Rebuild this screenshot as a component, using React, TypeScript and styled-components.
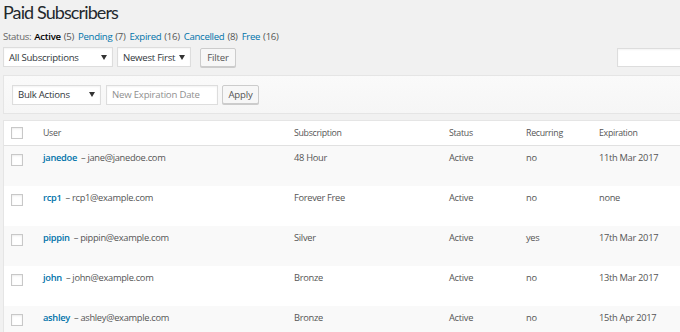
import React from "react";
import styled, { createGlobalStyle } from "styled-components";

const GlobalStyle = createGlobalStyle`
  html, body {
    margin: 0;
    padding: 0;
    background: #f1f1f1;
  }
  body {
    font-family: "Open Sans", "Noto Sans", sans-serif;
    color: #555;
  }
`;

const Page = styled.div`
  width: 680px;
  height: 332px;
  overflow: hidden;
  padding-left: 3px;
  box-sizing: border-box;
`;

const Title = styled.h1`
  margin: 0;
  padding-top: 1px;
  font-family: Lato, "Open Sans", sans-serif;
  font-size: 18px;
  font-weight: 400;
  line-height: 22px;
  color: #23282d;
  letter-spacing: -0.9px;
`;

const StatusLine = styled.div`
  margin-top: 6px;
  height: 16px;
  font-size: 9.6px;
  letter-spacing: -0.3px;
  line-height: 16px;
  color: #666;
  display: flex;
  gap: 4px;
  white-space: nowrap;
`;

const StatusItem = styled.span`
  display: inline-flex;
  gap: 3px;
`;

const Current = styled.span`
  font-weight: 600;
  color: #000;
`;

const Link = styled.a`
  color: #0073aa;
  text-decoration: none;
`;

const Count = styled.span`
  color: #555;
`;

const FilterBar = styled.div`
  margin-top: 2px;
  height: 20px;
  display: flex;
  align-items: center;
`;

const Select = styled.div<{ $width: number; $gap?: number }>`
  width: ${(p) => p.$width}px;
  height: 20px;
  box-sizing: border-box;
  border: 1px solid #ddd;
  background: #fff;
  box-shadow: inset 0 1px 2px rgba(0, 0, 0, 0.05);
  margin-right: ${(p) => p.$gap ?? 0}px;
  display: flex;
  align-items: center;
  justify-content: space-between;
  padding: 0 5px 0 5px;
  font-size: 9.6px;
  letter-spacing: -0.25px;
  color: #32373c;
  white-space: nowrap;
`;

const Arrow = styled.svg`
  width: 6px;
  height: 5px;
  flex: none;
`;

const Button = styled.div<{ $width: number }>`
  width: ${(p) => p.$width}px;
  height: 19px;
  box-sizing: border-box;
  border: 1px solid #ccc;
  border-radius: 2px;
  background: #f7f7f7;
  box-shadow: 0 1px 0 #ccc;
  display: flex;
  align-items: center;
  justify-content: center;
  font-size: 9.6px;
  letter-spacing: -0.2px;
  color: #555;
`;

const Spacer = styled.div`
  flex: 1;
`;

const Search = styled.div`
  width: 70px;
  height: 19px;
  box-sizing: border-box;
  border: 1px solid #ddd;
  background: #fff;
  margin-right: -7px;
  box-shadow: inset 0 1px 2px rgba(0, 0, 0, 0.05);
`;

const TableNav = styled.div`
  margin-top: 8px;
  margin-right: -2px;
  height: 39px;
  box-sizing: border-box;
  border: 1px solid #e5e5e5;
  border-right: none;
  background: linear-gradient(#fafafa, #f6f6f6);
  display: flex;
  align-items: center;
  padding-left: 8px;
`;

const DateInput = styled.input`
  width: 112px;
  height: 20px;
  box-sizing: border-box;
  border: 1px solid #ddd;
  background: #fff;
  font-family: inherit;
  font-size: 9.6px;
  letter-spacing: -0.2px;
  padding: 0 5px;
  margin: 0 4px 0 5px;
  outline: none;
  box-shadow: inset 0 1px 2px rgba(0, 0, 0, 0.05);
  &::placeholder {
    color: #8f8f8f;
  }
`;

const Table = styled.div`
  margin-top: 6px;
  border: 1px solid #e5e5e5;
  border-right: none;
  background: #fff;
`;

const Row = styled.div<{ $striped?: boolean; $head?: boolean }>`
  display: grid;
  grid-template-columns: 32px 251px 155px 77px 73px 1fr;
  height: ${(p) => (p.$head ? 24 : 40)}px;
  background: ${(p) => (p.$striped ? "#f9f9f9" : "#fff")};
  border-bottom: ${(p) => (p.$head ? "1px solid #e1e1e1" : "none")};
`;

const Cell = styled.div<{ $head?: boolean }>`
  padding: 4px 0 0 7px;
  font-size: ${(p) => (p.$head ? "8.8px" : "9.3px")};
  letter-spacing: -0.3px;
  line-height: 16px;
  color: #555;
  white-space: nowrap;
`;

const CheckCell = styled.div<{ $head?: boolean }>`
  padding: ${(p) => (p.$head ? "6px" : "8px")} 0 0 7px;
`;

const Checkbox = styled.div`
  width: 12px;
  height: 12px;
  box-sizing: border-box;
  border: 1px solid #c8c8c8;
  background: #fff;
  box-shadow: inset 0 1px 2px rgba(0, 0, 0, 0.08);
`;

const UserLink = styled.a`
  color: #0073aa;
  font-weight: 600;
  text-decoration: none;
  margin-right: 4px;
`;

const Email = styled.span`
  color: #555;
`;

const DropArrow = () => (
  <Arrow viewBox="0 0 6 5">
    <path d="M0 0 L6 0 L3 5 Z" fill="#333" />
  </Arrow>
);

const statuses = [
  { label: "Pending", count: 7 },
  { label: "Expired", count: 16 },
  { label: "Cancelled", count: 8 },
  { label: "Free", count: 16 },
];

const members = [
  { user: "janedoe", email: "jane@janedoe.com", sub: "48 Hour", status: "Active", recurring: "no", exp: "11th Mar 2017" },
  { user: "rcp1", email: "rcp1@example.com", sub: "Forever Free", status: "Active", recurring: "no", exp: "none" },
  { user: "pippin", email: "pippin@example.com", sub: "Silver", status: "Active", recurring: "yes", exp: "17th Mar 2017" },
  { user: "john", email: "john@example.com", sub: "Bronze", status: "Active", recurring: "no", exp: "13th Mar 2017" },
  { user: "ashley", email: "ashley@example.com", sub: "Bronze", status: "Active", recurring: "no", exp: "15th Apr 2017" },
];

export default function App() {
  return (
    <Page>
      <GlobalStyle />
      <Title>Paid Subscribers</Title>
      <StatusLine>
        <StatusItem>
          Status: <Current>Active</Current> <Count>(5)</Count>
        </StatusItem>
        {statuses.map((s) => (
          <StatusItem key={s.label}>
            <Link href="#">{s.label}</Link> <Count>({s.count})</Count>
          </StatusItem>
        ))}
      </StatusLine>
      <FilterBar>
        <Select $width={110} $gap={4}>
          All Subscriptions
          <DropArrow />
        </Select>
        <Select $width={74} $gap={9}>
          Newest First
          <DropArrow />
        </Select>
        <Button $width={36}>Filter</Button>
        <Spacer />
        <Search />
      </FilterBar>
      <TableNav>
        <Select $width={89}>
          Bulk Actions
          <DropArrow />
        </Select>
        <DateInput placeholder="New Expiration Date" />
        <Button $width={37}>Apply</Button>
      </TableNav>
      <Table>
        <Row $head>
          <CheckCell $head>
            <Checkbox />
          </CheckCell>
          <Cell $head>User</Cell>
          <Cell $head>Subscription</Cell>
          <Cell $head>Status</Cell>
          <Cell $head>Recurring</Cell>
          <Cell $head>Expiration</Cell>
        </Row>
        {members.map((m, i) => (
          <Row key={m.user} $striped={i % 2 === 0}>
            <CheckCell>
              <Checkbox />
            </CheckCell>
            <Cell>
              <UserLink href="#">{m.user}</UserLink>
              <Email>– {m.email}</Email>
            </Cell>
            <Cell>{m.sub}</Cell>
            <Cell>{m.status}</Cell>
            <Cell>{m.recurring}</Cell>
            <Cell>{m.exp}</Cell>
          </Row>
        ))}
      </Table>
    </Page>
  );
}
